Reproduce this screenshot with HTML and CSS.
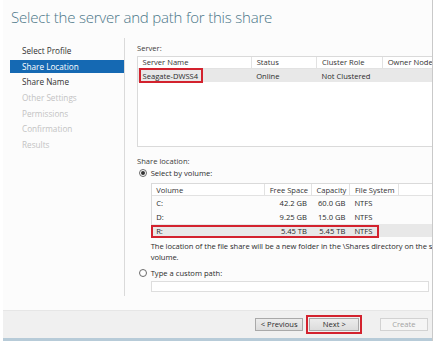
FILE: index.html
```html
<!doctype html>
<html>
    <head>
        <link rel="stylesheet" href="styles.css">
    </head>
    <body>
        <div class="wizard">
            <div class="wizard-head">
                <h1>Select the server and path for this share</h1>
            </div>
            <div class="wizard-body">
                <ul class="steps">
                    <li class="done">Select Profile</li>
                    <li class="current">Share Location</li>
                    <li class="done">Share Name</li>
                    <li>Other Settings</li>
                    <li>Permissions</li>
                    <li>Confirmation</li>
                    <li>Results</li>
                </ul>
                <div class="page">
                    <div class="label">Server:</div>
                    <div class="list server-list">
                        <table>
                            <colgroup>
                                <col class="c-name">
                                <col class="c-status">
                                <col class="c-role">
                                <col class="c-owner">
                            </colgroup>
                            <tr>
                                <th>Server Name</th>
                                <th>Status</th>
                                <th>Cluster Role</th>
                                <th>Owner Node</th>
                            </tr>
                            <tr class="picked">
                                <td>Seagate-DWSS4</td>
                                <td>Online</td>
                                <td>Not Clustered</td>
                                <td></td>
                            </tr>
                        </table>
                        <div class="callout server-callout"></div>
                    </div>

                    <div class="label share-label">Share location:</div>
                    <div class="choice"><span class="radio on"></span>Select by volume:</div>
                    <div class="list volume-list">
                        <table>
                            <colgroup>
                                <col class="c-vol">
                                <col class="c-free">
                                <col class="c-cap">
                                <col class="c-fs">
                                <col class="c-rest">
                            </colgroup>
                            <tr>
                                <th>Volume</th>
                                <th class="num">Free Space</th>
                                <th class="num">Capacity</th>
                                <th>File System</th>
                                <th class="blank"></th>
                            </tr>
                            <tr>
                                <td>C:</td>
                                <td class="num">42.2 GB</td>
                                <td class="num">60.0 GB</td>
                                <td>NTFS</td>
                                <td></td>
                            </tr>
                            <tr>
                                <td>D:</td>
                                <td class="num">9.25 GB</td>
                                <td class="num">15.0 GB</td>
                                <td>NTFS</td>
                                <td></td>
                            </tr>
                            <tr class="picked">
                                <td>R:</td>
                                <td class="num">5.45 TB</td>
                                <td class="num">5.45 TB</td>
                                <td>NTFS</td>
                                <td></td>
                            </tr>
                        </table>
                        <div class="callout volume-callout"></div>
                    </div>
                    <p class="hint">The location of the file share will be a new folder in the \Shares directory on the selected<br>volume.</p>

                    <div class="choice"><span class="radio"></span>Type a custom path:</div>
                    <div class="path-box"></div>
                </div>
            </div>
            <div class="wizard-foot">
                <button>&lt; Previous</button>
                <button class="next">Next &gt;</button>
                <button class="create" disabled>Create</button>
            </div>
        </div>
    </body>
</html>
```

FILE: styles.css
```css
body {
    margin: 0;
    background: #fff;
    font-family: "Open Sans", "Noto Sans", sans-serif;
    font-size: 7.6px;
    color: #2b2b2b;
}
.wizard {
    box-sizing: border-box;
    width: 430px;
    height: 341px;
    margin-left: 3px;
    border-right: 1px solid #c9c9c9;
    background: #fcfcfc;
    display: flex;
    flex-direction: column;
}
.wizard-head {
    height: 38px;
    padding-left: 8px;
}
.wizard-head h1 {
    margin: 0;
    padding-top: 6px;
    font-size: 15px;
    line-height: 22px;
    font-weight: 300;
    color: #4b7688;
    letter-spacing: -0.2px;
}
.wizard-body {
    height: 272px;
    display: flex;
    align-items: flex-start;
}

/* left step list */
.steps {
    list-style: none;
    margin: 0;
    padding: 6px 0 0 7px;
    width: 114px;
    height: 252px;
    border-right: 1px solid #dadada;
}
.steps li {
    height: 13px;
    line-height: 13px;
    margin-bottom: 2.7px;
    padding-left: 12px;
    color: #c3c3c3;
    font-size: 8.2px;
}
.steps li.done {
    color: #333;
}
.steps li.current {
    background: #1569b3;
    color: #fff;
}

/* right page */
.page {
    flex: 1;
    height: 272px;
    padding: 5px 0 0 12px;
    overflow: hidden;
    box-sizing: border-box;
}
.label {
    line-height: 10px;
    color: #3a3a3a;
}
.share-label {
    margin-top: 9.5px;
    line-height: 11px;
}
.list {
    position: relative;
    border: 1px solid #dadada;
    border-right: none;
    background: #fff;
}
.server-list {
    margin-top: 2.7px;
    width: 320px;
    height: 89px;
}
table {
    border-collapse: collapse;
    table-layout: fixed;
    width: 100%;
}
th {
    font-weight: normal;
    text-align: left;
    height: 11.6px;
    padding: 0 4px 0 4.5px;
    border-right: 1px solid #e2e2e2;
    border-bottom: 1px solid #e2e2e2;
    white-space: nowrap;
    color: #333;
}
th.blank {
    border-right: none;
}
td {
    height: 13px;
    padding: 0 4px 0 4.5px;
    white-space: nowrap;
}
.num {
    text-align: right;
    padding-right: 4.5px;
}
tr.picked td {
    background: #e8e8e8;
}
.c-name { width: 113.7px; }
.c-status { width: 65.3px; }
.c-role { width: 65.7px; }
.c-owner { width: 75px; }

.callout {
    position: absolute;
    border: 2px solid #d3222e;
    box-sizing: border-box;
}
.server-callout {
    left: 1px;
    top: 11.3px;
    width: 64px;
    height: 15px;
}

.choice {
    display: flex;
    align-items: center;
    height: 11px;
    color: #2b2b2b;
}
.radio {
    box-sizing: border-box;
    width: 8px;
    height: 8px;
    margin: 0 4px 0 1.7px;
    border: 1px solid #6a6a6a;
    border-radius: 50%;
    background: #fff;
    display: flex;
    align-items: center;
    justify-content: center;
}
.radio.on::after {
    content: "";
    width: 4px;
    height: 4px;
    border-radius: 50%;
    background: #333;
}

.volume-list {
    margin: 5.2px 0 0 13.7px;
    width: 320px;
    border-bottom: none;
    background: transparent;
}
.volume-list th {
    height: 11px;
    background: #fff;
}
.volume-list td {
    height: 13.7px;
}
.c-vol { width: 112.6px; }
.c-free { width: 46.7px; }
.c-cap { width: 38.3px; }
.c-fs { width: 48.4px; }
.c-rest { width: 73px; }
.volume-callout {
    left: -1px;
    top: 40.3px;
    width: 228.3px;
    height: 13px;
}

.hint {
    margin: 4px 0 5px 13.7px;
    line-height: 10.6px;
    white-space: nowrap;
    letter-spacing: -0.05px;
    color: #2b2b2b;
}
.path-box {
    margin: 2.2px 0 0 13.7px;
    width: 278.6px;
    height: 10.7px;
    box-sizing: border-box;
    border: 1px solid #dedede;
    background: #fff;
}

/* bottom button bar */
.wizard-foot {
    box-sizing: border-box;
    background: #f0f0f0;
    border-top: 1px solid #e6e6e6;
    border-bottom: 3px solid #b7cbd8;
    height: 31px;
    padding: 6.7px 4.3px 0 0;
    display: flex;
    justify-content: flex-end;
    align-items: flex-start;
}
button {
    font-family: inherit;
    font-size: 7.6px;
    height: 13.3px;
    padding: 0;
    background: linear-gradient(#ececec, #dcdcdc);
    border: 1px solid #a9a9a9;
    color: #2b2b2b;
    width: 48.3px;
    margin-left: 6px;
}
button.next {
    width: 50px;
    outline: 2px solid #d3222e;
    outline-offset: 1px;
}
button.create {
    width: 47.7px;
    margin-left: 20.7px;
    background: #f5f5f5;
    border-color: #d2d2d2;
    color: #a3a3a3;
}
```
